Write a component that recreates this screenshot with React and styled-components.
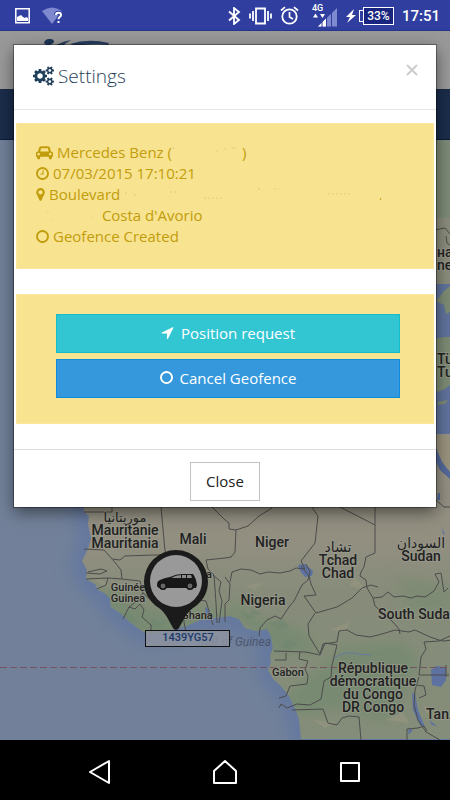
import React from "react";
import styled, { createGlobalStyle } from "styled-components";

const GlobalStyle = createGlobalStyle`
  * {
    box-sizing: border-box;
  }
  body {
    margin: 0;
    background: #000;
    font-family: "Open Sans", sans-serif;
  }
  svg {
    display: block;
    flex: none;
  }
`;

const Screen = styled.div`
  position: relative;
  display: flex;
  flex-direction: column;
  min-height: 100vh;
`;

const StatusBar = styled.div`
  display: flex;
  align-items: center;
  justify-content: space-between;
  height: 31px;
  padding: 1px 10px 0 15px;
  background: #303f9f;
  border-bottom: 1px solid #28358c;
  color: #fff;
  font-family: Roboto, sans-serif;
`;

const StatusGroup = styled.div`
  display: flex;
  align-items: center;
  gap: ${(p) => p.$gap}px;
`;

const Battery = styled.span`
  display: flex;
  align-items: center;
  margin-left: -6px;

  &::before {
    content: "";
    width: 3px;
    height: 10px;
    border: 1px solid #fff;
    border-right: 0;
  }
  span {
    width: 31px;
    border: 1px solid #fff;
    background: #1a2580;
    font-size: 12px;
    font-weight: 500;
    line-height: 16px;
    text-align: center;
  }
`;

const Time = styled.time`
  font-size: 15px;
  font-weight: 500;
`;

const SiteHeader = styled.header`
  height: 58px;
  padding: 7px 0 0 42px;
  background: #999;
`;

const SiteNav = styled.div`
  height: 51px;
  background: #1b2d4b;
  border-bottom: 1px solid #0b1a3c;
`;

const MapArea = styled.main`
  flex: 1;
  display: flex;
  overflow: hidden;
  background: #718199;

  svg {
    width: 100%;
    height: 100%;
    min-height: 600px;
  }
`;

const NavBar = styled.nav`
  display: grid;
  grid-template-columns: repeat(3, 1fr);
  height: 60px;
  padding: 0 38px;
  background: #000;
`;

const NavButton = styled.button`
  display: flex;
  align-items: center;
  justify-content: center;
  padding: 4px 0 0;
  border: 0;
  background: none;
`;

const Overlay = styled.div`
  position: absolute;
  top: 31px;
  left: 0;
  right: 0;
  padding: 14px 14px;
`;

const Dialog = styled.section`
  background: #fff;
  background-clip: padding-box;
  box-shadow: 0 0 0 1px rgba(0, 0, 0, 0.35), 0 5px 15px rgba(0, 0, 0, 0.5);
`;

const DialogHeader = styled.div`
  display: flex;
  justify-content: space-between;
  align-items: flex-start;
  height: 65px;
  padding: 15px 18px 0 19px;
  border-bottom: 1px solid #e5e5e5;
`;

const Title = styled.h4`
  display: flex;
  align-items: center;
  gap: 4px;
  margin: 0;
  color: #1f3e5a;
  font-size: 19px;
  font-weight: 300;
  line-height: 32px;
`;

const Dismiss = styled.button`
  display: flex;
  padding: 4px 0;
  border: 0;
  background: none;
  color: #ccc;
`;

const DialogBody = styled.div`
  display: flex;
  flex-direction: column;
  gap: 25px;
  padding: 13px 2px 25px;
`;

const Alert = styled.div`
  padding: ${(p) => p.$padding};
  border: 1px solid #fbe69b;
  background: #f8e391;
  color: #c29d0b;
`;

const InfoList = styled.div`
  font-size: 15px;
  line-height: 21px;
`;

const InfoRow = styled.div`
  display: flex;
  gap: 4px;

  > svg {
    margin-top: 3px;
  }
`;

const Blank = styled.span`
  display: inline-block;
  width: ${(p) => p.$width}px;
  height: 12px;

  svg {
    width: 100%;
    height: 100%;
  }
`;

const Actions = styled.div`
  display: flex;
  flex-direction: column;
  gap: 6px;
`;

const ActionButton = styled.button`
  display: flex;
  align-items: center;
  justify-content: center;
  gap: 7px;
  height: 39px;
  padding: 0 0 2px;
  border: 1px solid ${(p) => p.$edge};
  background: ${(p) => p.$color};
  color: #fff;
  font-family: inherit;
  font-size: 15px;
`;

const DialogFooter = styled.div`
  display: flex;
  justify-content: center;
  padding: 12px 0 6px;
  border-top: 1px solid #dfdfdf;
`;

const CloseButton = styled.button`
  width: 70px;
  height: 39px;
  padding: 0 0 2px;
  border: 1px solid #c2c2c2;
  background: #fff;
  color: #222;
  font-family: inherit;
  font-size: 15px;
`;

const MapLabel = styled.text`
  fill: ${(p) => p.$color || "#222"};
  stroke: ${(p) => (p.$italic ? "none" : "rgba(160, 160, 148, 0.55)")};
  stroke-width: 2px;
  stroke-linejoin: round;
  paint-order: stroke;
  font-family: Roboto, "DejaVu Sans", sans-serif;
  font-size: ${(p) => p.$size || 14}px;
  font-weight: ${(p) => (p.$italic ? 400 : 500)};
  font-style: ${(p) => (p.$italic ? "italic" : "normal")};
  text-anchor: ${(p) => p.$anchor || "middle"};
`;

const PlateLabel = styled.text`
  fill: #1b3a6b;
  font-family: Roboto, sans-serif;
  font-size: 11px;
  font-weight: 500;
  text-anchor: middle;
`;

const smallCog =
  "v140q0 16-149 31-12 27-30 52 51 113 51 138 0 4-4 7-122 71-124 71-8 0-46-47t-52-68q-20 2-30 2t-30-2q-14 21-52 68t-46 47q-2 0-124-71-4-3-4-7 0-25 51-138-18-25-30-52-149-15-149-31v-140q0-16 149-31 13-29 30-52-51-113-51-138 0-4 4-7 4-2 35-20t59-34 30-16q8 0 46 46.5t52 67.5q20-2 30-2t30 2q51-71 92-112l6-2q4 0 124 70 4 3 4 7 0 25-51 138 17 23 30 52 149 15 149 31z";

const glyphs = {
  cogs: {
    box: "0 0 1920 1792",
    path:
      "M896 896q0-106-75-181t-181-75-181 75-75 181 75 181 181 75 181-75 75-181zm768 512q0-52-38-90t-90-38-90 38-38 90q0 53 37.5 90.5t90.5 37.5 90.5-37.5 37.5-90.5zm0-1024q0-52-38-90t-90-38-90 38-38 90q0 53 37.5 90.5t90.5 37.5 90.5-37.5 37.5-90.5zm-384 421v185q0 10-7 19.5t-16 10.5l-155 24q-11 35-32 76 34 48 90 115 7 11 7 20 0 12-7 19-23 30-82.5 89.5t-78.5 59.5q-11 0-21-7l-115-90q-37 19-77 31-11 108-23 155-7 24-30 24h-186q-11 0-20-7.5t-10-17.5l-23-153q-34-10-75-31l-118 89q-7 7-20 7-11 0-21-8-144-133-144-160 0-9 7-19 10-14 41-53t47-61q-23-44-35-82l-152-24q-10-1-17-9.5t-7-19.5v-185q0-10 7-19.5t16-10.5l155-24q11-35 32-76-34-48-90-115-7-11-7-20 0-12 7-20 22-30 82-89t79-59q11 0 21 7l115 90q34-18 77-32 11-108 23-154 7-24 30-24h186q11 0 20 7.5t10 17.5l23 153q34 10 75 31l118-89q8-7 20-7 11 0 21 8 144 133 144 160 0 8-7 19-12 16-42 54t-45 60q23 48 34 82l152 23q10 2 17 10.5t7 19.5z" +
      "M1920 1338" + smallCog + "M1920 314" + smallCog
  },
  car: {
    box: "0 0 2048 1792",
    path:
      "M480 1088q0-66-47-113t-113-47-113 47-47 113 47 113 113 47 113-47 47-113zm36-320h1016l-89-357q-2-8-14-17.5t-21-9.5h-768q-9 0-21 9.5t-14 17.5zm1372 320q0-66-47-113t-113-47-113 47-47 113 47 113 113 47 113-47 47-113zm160-96v384q0 14-9 23t-23 9h-96v128q0 80-56 136t-136 56-136-56-56-136v-128h-1024v128q0 80-56 136t-136 56-136-56-56-136v-128h-96q-14 0-23-9t-9-23v-384q0-93 65.5-158.5t158.5-65.5h28l105-419q23-94 104-157.5t179-63.5h768q98 0 179 63.5t104 157.5l105 419h28q93 0 158.5 65.5t65.5 158.5z"
  },
  clock: {
    box: "128 0 1536 1792",
    path:
      "M1024 544v448q0 14-9 23t-23 9h-320q-14 0-23-9t-9-23v-64q0-14 9-23t23-9h224v-352q0-14 9-23t23-9h64q14 0 23 9t9 23zm416 352q0-148-73-273t-198-198-273-73-273 73-198 198-73 273 73 273 198 198 273 73 273-73 198-198 73-273zm224 0q0 209-103 385.5t-279.5 279.5-385.5 103-385.5-103-279.5-279.5-103-385.5 103-385.5 279.5-279.5 385.5-103 385.5 103 279.5 279.5 103 385.5z"
  },
  pin: {
    box: "384 0 1024 1792",
    path:
      "M1152 640q0-106-75-181t-181-75-181 75-75 181 75 181 181 75 181-75 75-181zm256 0q0 109-33 179l-364 774q-16 33-47.5 52t-67.5 19-67.5-19-46.5-52l-365-774q-33-70-33-179 0-212 150-362t362-150 362 150 150 362z"
  },
  circle: {
    box: "128 0 1536 1792",
    path:
      "M896 352q-148 0-273 73t-198 198-73 273 73 273 198 198 273 73 273-73 198-198 73-273-73-273-198-198-273-73zm768 544q0 209-103 385.5t-279.5 279.5-385.5 103-385.5-103-279.5-279.5-103-385.5 103-385.5 279.5-279.5 385.5-103 385.5 103 279.5 279.5 103 385.5z"
  },
  arrow: {
    box: "192 0 1408 1792",
    path:
      "M1593 349l-640 1280q-17 35-57 35-5 0-15-2-22-5-35.5-22.5t-13.5-39.5v-576h-576q-22 0-39.5-13.5t-22.5-35.5 4-42 29-30l1280-640q13-7 29-7 27 0 45 19 15 14 18.5 34.5t-6.5 39.5z"
  }
};

function Glyph({ name, width, height = 15 }) {
  const { box, path } = glyphs[name];
  return (
    <svg width={width} height={height} viewBox={box} fill="currentColor" aria-hidden="true">
      <path d={path} fillRule="evenodd" />
    </svg>
  );
}

function StatusIcons() {
  return (
    <StatusBar>
      <StatusGroup $gap={12}>
        <svg width="15" height="16" viewBox="0 0 15 16">
          <path d="M.8.8h13.4v14H.8z" fill="none" stroke="#fff" strokeWidth="1.5" />
          <path d="M2 13V9l2-1 2-1 2 2 2 1 1-1 2 1v3z" fill="#fff" />
        </svg>
        <svg width="21" height="17" viewBox="0 0 21 17">
          <path d="M0 4Q10-3 20 4L10 17z" fill="#7f89cf" />
          <path
            d="M14 8q0-2.300 2.500-2.300T19 8q0 1.200-1.500 2.200-1 .700-1 2M16.500 14v2"
            fill="none"
            stroke="#303f9f"
            strokeWidth="4"
          />
          <path
            d="M14 8q0-2.300 2.500-2.300T19 8q0 1.200-1.500 2.200-1 .700-1 2M16.500 14v2"
            fill="none"
            stroke="#fff"
            strokeWidth="2"
          />
        </svg>
      </StatusGroup>
      <StatusGroup $gap={8}>
        <svg width="13" height="18" viewBox="0 0 13 18">
          <path d="M1 4.500l10 8.500-5 4V1l5 4L1 13.500" fill="none" stroke="#fff" strokeWidth="1.800" />
        </svg>
        <svg width="23" height="18" viewBox="0 0 23 18">
          <path
            d="M7 1.500h9v15H7zM4 4v10M1 6.500v5M19 4v10M22 6.500v5"
            fill="none"
            stroke="#fff"
            strokeWidth="1.800"
          />
        </svg>
        <svg width="19" height="19" viewBox="0 0 19 19">
          <circle cx="9.500" cy="10.500" r="7.200" fill="none" stroke="#fff" strokeWidth="1.800" />
          <path d="M1 4.500l4-3.300M18 4.500l-4-3.300M9.500 6v5l3.500 2" fill="none" stroke="#fff" strokeWidth="1.700" />
        </svg>
        <svg width="30" height="24" viewBox="-6 0 30 24">
          <text x="-1" y="7" fill="#fff" fontFamily="Roboto, sans-serif" fontWeight="500" fontSize="9">
            4G
          </text>
          <path d="M0 13.500l2.500-4 2.500 4zM7 10h5l-2.500 4z" fill="#fff" />
          <path d="M5 22.500L24 4v18.500z" fill="#7f89cf" />
          <path d="M5 22.500l8-8v8z" fill="#fff" />
          <path d="M9 15v8M13.500 8v15M18.500 5v18" stroke="#303f9f" strokeWidth="1" />
        </svg>
        <svg width="12" height="16" viewBox="-1 0 12 16">
          <path d="M8 1L0 9h4l-3 6 9-8H6z" fill="#fff" />
        </svg>
        <Battery>
          <span>33%</span>
        </Battery>
        <Time>17:51</Time>
      </StatusGroup>
    </StatusBar>
  );
}

const labels = [
  { text: "на", x: 437, y: 257, anchor: "start" },
  { text: "ne", x: 437, y: 270, anchor: "start" },
  { text: "Tü", x: 437, y: 364, anchor: "start" },
  { text: "Tu", x: 437, y: 377, anchor: "start" },
  { text: "موريتانيا", x: 125, y: 522, size: 13 },
  { text: "Mauritanie", x: 125, y: 535 },
  { text: "Mauritania", x: 125, y: 548 },
  { text: "Mali", x: 193, y: 544 },
  { text: "Niger", x: 272, y: 547 },
  { text: "تشاد", x: 338, y: 552 },
  { text: "Tchad", x: 338, y: 565 },
  { text: "Chad", x: 338, y: 578 },
  { text: "السودان", x: 421, y: 548 },
  { text: "Sudan", x: 421, y: 561 },
  { text: "a", x: 209, y: 578, size: 11 },
  { text: "Guinée", x: 128, y: 591, size: 11 },
  { text: "Guinea", x: 128, y: 602, size: 11 },
  { text: "Ghana", x: 197, y: 619, size: 11 },
  { text: "Nigeria", x: 263, y: 605 },
  { text: "South Sudan", x: 378, y: 619, anchor: "start" },
  { text: "Gabon", x: 288, y: 676, size: 11 },
  { text: "République", x: 373, y: 673 },
  { text: "démocratique", x: 373, y: 686 },
  { text: "du Congo", x: 373, y: 699 },
  { text: "DR Congo", x: 373, y: 712 },
  { text: "Tanzania", x: 426, y: 719, anchor: "start" }
];

const coast =
  "M84 434V512l5 4-1 8 3 14-3 11-6 12 5 9-1 9 9 5 3 6 6 3 6 5 1 9 9 6 10 9 9 7 11 6 10-3 14-3 12-3 14-6 14-2 16-2 9 3 6 9 11 3 11-2 4 7 2 12-3 8 1 6-3 8 5 9 8 7 8 10 6 12 4 11 2 20H450V434z";

const borders = [
  "M84 512h28v-5M161 507l4 44 3 3M84 549l20 1 8 9 8 1 5-4 30-1h14M206 560l19-2M113 560l8 10 1 9-14-1-22 1M88 572l13-3 6 2-7 3-14-1M108 578l-2 7-9 4M122 579l18 2 3 12-6 8-8 6-6 12M129 607l6 2 5-5 4 6-2 7 9 8v9M143 593l9 8 8-2 20 1 3 16 3 17M183 600l9-1 14 2 7 24M206 560l2 9 6 6 2 28 1 20M213 575l8 7-2 9 3 10-3 22",
  "M212 507l12 12 5 4v6l7 1 12-4 11-10 13-8M236 530l-1 22-4 5-6 1M225 577l5 7-1 16-4 4v18M230 582l2-10 9-3 10 1 9 4 8-2 12 1 10-2 6-3 9 1-4-8 14-18 3-27-5-7v-6",
  "M306 564l4 8-2 8-6 5-8 16-5 6-8 12-6-3-8 4-7 8-1 8M301 566l8 10 2 8 5 11-12 1 12 17 21-6 15-9 10-10 9-3 7 2M315 613l-7 11 1 12 11 18 3-10 14-2 2-11 8-1 9 5 14 2 12-3 13-4 14 2 6-2 15 7 12 4 12-1 10-5",
  "M340 507l35 18V507M375 525v28l-9 4-2 10-3 5-1 4 6 4 1 8 6 10 9-1 6-5 6 5 9-1 8 2 6-2 8 1 9-6 5-9-4-8 6-1 3 19 4-4M373 598l2 8 18 16 6 7 1 5",
  "M274 651l32 1 14 3 5-12 12 2-5 20-1 12-7 4-3 18-11 6-13-1-10 4-6-4-2 4M275 660h11v-7M300 652l-1 7 9 2-3 8 3 7-1 8-17 2-4 10-7 2M292 710l31-1 5 14 9 2 5-7 7-2 10 1 2 23",
  "M424 642l2 7-5 8-2 18h30M419 677l-4 13-1 15 4 15 8 12 14 8M424 642l15-1 11-5M416 685l8 1 2 9-7 3M407 740v-11l11-1 6-2 3 5M435 230l10-2 5 6M446 236l1 7 3 2M446 677v-12M436 500l8 7h6"
];

function CountryMap() {
  return (
    <svg viewBox="0 140 450 600" preserveAspectRatio="xMinYMin slice">
      <defs>
        <linearGradient id="land" x1="0" y1="0" x2="0" y2="1">
          <stop offset="0" stopColor="#969284" />
          <stop offset="0.35" stopColor="#928f81" />
          <stop offset="0.53" stopColor="#868c79" />
          <stop offset="1" stopColor="#848d79" />
        </linearGradient>
        <filter id="soft" x="-20%" y="-20%" width="140%" height="140%">
          <feGaussianBlur stdDeviation="6" />
        </filter>
        <filter id="shelf" x="-20%" y="-20%" width="140%" height="140%">
          <feGaussianBlur stdDeviation="10" />
        </filter>
        <clipPath id="africa">
          <path d={coast} />
        </clipPath>
      </defs>
      <path d="M0 140h450v600H0z" fill="#728199" />
      <path d={coast} fill="none" stroke="#6076a1" strokeWidth="18" filter="url(#shelf)" />
      <path d={coast} fill="url(#land)" />
      <g clipPath="url(#africa)">
        <g filter="url(#soft)" fill="#788a72">
          <path d="M84 594l30-4 20 14 40 10 30-6 24 4 10 14-40 12-50 4z" />
          <path d="M230 600l34 20 38 10 20 24-50 0-40-40z" />
          <path d="M324 664l20-18 60-4 16 20-14 30-20 30-50-14-30 8-30-12z" />
          <path d="M395 575l55 10v30h-40z" opacity="0.600" />
        </g>
        <g fill="#6f8770" opacity="0.550">
          <path d="M118 612l12 2 9 10-10-2zM152 618l12 5-4 7-9-3zM240 611l14 6-6 3zM268 623l14-4 8 8-11 3zM286 640l12 3-8 7-10-4zM262 614l-9-5-4 6z" />
        </g>
        <g fill="#999881" opacity="0.550">
          <path d="M92 577l12 4 8 6-10-2zM160 571l22 6-12 3zM246 586l18-4-10 8zM330 630l20-8-5 10zM313 720l24 2-12 6zM385 720l18-7 6 10zM424 705l9 6-7 3zM355 578l12 12-18-4z" />
        </g>
      </g>
      <path d="M298 565l7-1 8 7-1 5-7 1-5-6zM431 670l5-4 10 1v13l-5 7-9-2zM412 693l3 1 3 16 7 17-5-2-7-15zM429 720l8 6-5-1zM442 527l3 8-2-1zM409 729l4 1-5 5zM205 607l5 4-2 4 4 5-6-5z" fill="#5d72a0" />
      <path d="M334 658q12-8 24-4l13 1" fill="none" stroke="#657ba0" strokeWidth="1" />
      {/* eastern edge, seen beside the dialog */}
      <path d="M430 140h20v144h-20z" fill="#7d8a77" />
      <path d="M430 218h20v66h-20z" fill="#8a8c7b" />
      <path d="M430 284h20v150h-20z" fill="#60739c" />
      <path d="M436 301l8-10 6-5v26l-4 2-2-9zM430 340l14-3h6v48l-7 5-13 4z" fill="#7d8b74" />
      <path d="M438 402l10-2-3 4-7 1z" fill="#7d8b74" />
      <path d="M436 437l11-3 3 7v35l-14-28z" fill="#9a937e" />
      <path d="M436 448l6 14 8 10v7l-10-9-4-8zM438 493h2v7h-3z" fill="#53699b" />
      <g fill="none" stroke="#4c4c4c" strokeWidth="1" strokeLinejoin="round">
        {borders.map((d, index) => (
          <path key={index} d={d} />
        ))}
      </g>
      <path d="M0 667.500h450" stroke="#74545f" strokeWidth="1" strokeDasharray="7 3" />
      {labels.map((l, index) => (
        <MapLabel key={index} x={l.x} y={l.y} $size={l.size} $anchor={l.anchor}>
          {l.text}
        </MapLabel>
      ))}
      <MapLabel x="271" y="646" $size={12} $anchor="end" $italic $color="#4d566c">
        Gulf of Guinea
      </MapLabel>
      <rect x="145.500" y="630.500" width="84" height="16" fill="#8d93a0" fillOpacity="0.850" stroke="#111" />
      <PlateLabel x="188" y="641">1439YG57</PlateLabel>
      <path d="M176 550a32 32 0 0 1 32 32c0 12-7 21-15 26-7 5-10 13-14 20q-3 4-6 0c-4-7-7-15-14-20-8-5-15-14-15-26a32 32 0 0 1 32-32z" fill="#1b1b1b" />
      <circle cx="176" cy="581" r="26" fill="#999" />
      <path d="M157 585q0-4 3-5 4-2 10-3 6-3 12-3h11q2 3 3 6l1 5-1 3h-36q-3 0-3-3z" fill="#171717" />
      <path d="M171 578q5-3 10-3v3zM182 575h4v3h-4zM187 575h4l1 3h-5z" fill="#8c8c8c" />
      <g fill="#666" stroke="#151515" strokeWidth="1.500">
        <circle cx="163" cy="586" r="3.200" />
        <circle cx="190" cy="586" r="3.200" />
      </g>
    </svg>
  );
}

function Settings() {
  return (
    <Overlay>
      <Dialog role="dialog" aria-labelledby="settings-title">
        <DialogHeader>
          <Title id="settings-title">
            <Glyph name="cogs" width={21} height={20} />
            Settings
          </Title>
          <Dismiss type="button" aria-label="Close">
            <svg width="12" height="12" viewBox="0 0 12 12">
              <path d="M1 1l10 10M11 1L1 11" stroke="currentColor" strokeWidth="2" />
            </svg>
          </Dismiss>
        </DialogHeader>
        <DialogBody>
          <Alert $padding="18px 19px 21px">
            <InfoList>
              <InfoRow>
                <Glyph name="car" width={17} />
                <span>
                  Mercedes Benz (
                  <Blank $width={70}>
                    <svg viewBox="0 0 70 12" stroke="#e6d07a" strokeWidth="1">
                      <path d="M1 3l1-2M44 5h2M52 3h2M60 2h4" />
                    </svg>
                  </Blank>
                  )
                </span>
              </InfoRow>
              <InfoRow>
                <Glyph name="clock" width={13} />
                <span>07/03/2015 17:10:21</span>
              </InfoRow>
              <InfoRow>
                <Glyph name="pin" width={9} />
                <span>
                  Boulevard
                  <Blank $width={264}>
                    <svg viewBox="0 0 264 12" stroke="#e3cc72" strokeWidth="1">
                      <path d="M6 4v4M14 7h4M50 4h6M84 10h20M138 1h3M154 1h5M208 6h24" strokeDasharray="2 2" />
                      <path d="M260 12l1-2" stroke="#c29d0b" />
                    </svg>
                  </Blank>
                </span>
              </InfoRow>
              <InfoRow>
                <span>
                  <Blank $width={62}>
                    <svg viewBox="0 0 62 12" stroke="#ead683" strokeWidth="1">
                      <path d="M10 3h3M16 10l2 2M56 8v2" />
                    </svg>
                  </Blank>
                  {" Costa d'Avorio"}
                </span>
              </InfoRow>
              <InfoRow>
                <Glyph name="circle" width={13} />
                <span>Geofence Created</span>
              </InfoRow>
            </InfoList>
          </Alert>
          <Alert $padding="19px 33px 25px 39px">
            <Actions>
              <ActionButton type="button" $color="#32c6d3" $edge="#15bdcb">
                <Glyph name="arrow" width={13} />
                Position request
              </ActionButton>
              <ActionButton type="button" $color="#3598dc" $edge="#0f8bdf">
                <Glyph name="circle" width={13} />
                Cancel Geofence
              </ActionButton>
            </Actions>
          </Alert>
        </DialogBody>
        <DialogFooter>
          <CloseButton type="button">Close</CloseButton>
        </DialogFooter>
      </Dialog>
    </Overlay>
  );
}

function App() {
  return (
    <>
      <GlobalStyle />
      <Screen>
        <StatusIcons />
        <SiteHeader>
          <svg width="70" height="30" viewBox="0 0 70 30">
            <ellipse cx="7" cy="4" rx="5" ry="3" fill="#1d3557" transform="rotate(-12 7 4)" />
            <path d="M14 7q8-4 15-5-7 4-9 7zM28 6q18-6 39-1l-1 2q-16-2-32 1z" fill="#263e5e" />
          </svg>
        </SiteHeader>
        <SiteNav />
        <MapArea>
          <CountryMap />
        </MapArea>
        <NavBar>
          <NavButton type="button" aria-label="Back">
            <svg width="24" height="26" viewBox="0 0 24 26">
              <path d="M21 2v22L2 13z" fill="none" stroke="#fff" strokeWidth="2" strokeLinejoin="round" />
            </svg>
          </NavButton>
          <NavButton type="button" aria-label="Home">
            <svg width="26" height="26" viewBox="0 0 26 26">
              <path d="M2 24V12L13 2l11 10v12z" fill="none" stroke="#fff" strokeWidth="2" strokeLinejoin="round" />
            </svg>
          </NavButton>
          <NavButton type="button" aria-label="Recent apps">
            <svg width="22" height="22" viewBox="0 0 22 22">
              <path d="M2 2h18v18H2z" fill="none" stroke="#fff" strokeWidth="2" strokeLinejoin="round" />
            </svg>
          </NavButton>
        </NavBar>
        <Settings />
      </Screen>
    </>
  );
}

export default App;
